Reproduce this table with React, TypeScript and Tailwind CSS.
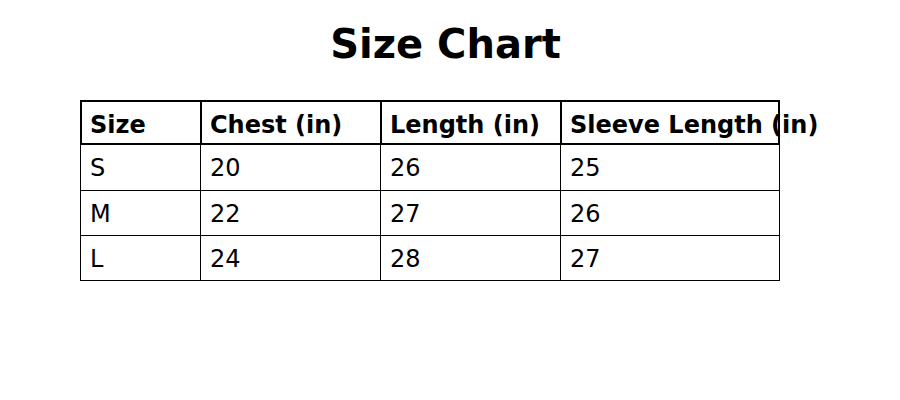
const headers = ['Size', 'Chest (in)', 'Length (in)', 'Sleeve Length (in)'];

const rows = [
  ['S', '20', '26', '25'],
  ['M', '22', '27', '26'],
  ['L', '24', '28', '27'],
];

// widths of cells after their own left border
const headWidths = ['w-[118px]', 'w-[180px] border-l-2', 'w-[180px] border-l-2', 'w-[218px] border-l-2'];
const bodyWidths = ['w-[119px]', 'w-[180px] border-l', 'w-[180px] border-l', 'w-[219px] border-l'];

export default function App() {
  return (
    <div className="w-[900px] h-[400px] bg-white text-black font-['DejaVu_Sans',sans-serif]">
      <h1 className="pt-[24px] pr-[9px] text-center text-[40px] leading-[40px] font-bold">Size Chart</h1>

      <div className="ml-[80px] mt-[36px] w-[700px]">
        {/* header */}
        <div className="flex h-[45px] border-2 border-black">
          {headers.map((h, i) => (
            <div
              key={h}
              className={`${headWidths[i]} shrink-0 border-black flex items-center pl-[8px] pt-[4px] text-[24px] font-bold whitespace-nowrap`}
            >
              {h}
            </div>
          ))}
        </div>

        {/* body */}
        {rows.map((r, ri) => (
          <div
            key={r[0]}
            className={`flex border-x border-b border-black ${ri === 0 ? 'h-[46px]' : 'h-[45px]'}`}
          >
            {r.map((c, ci) => (
              <div
                key={ci}
                className={`${bodyWidths[ci]} shrink-0 border-black flex items-center pl-[9px] pt-[1px] text-[24px] whitespace-nowrap`}
              >
                {c}
              </div>
            ))}
          </div>
        ))}
      </div>
    </div>
  );
}
